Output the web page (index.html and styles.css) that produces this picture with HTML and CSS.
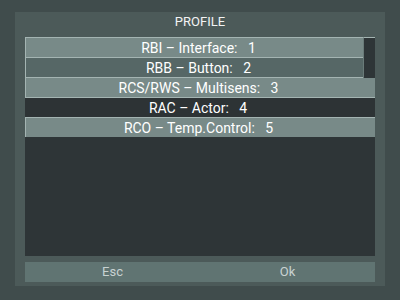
FILE: index.html
```html
<!DOCTYPE html>
<html>
<head>
    <title>Profile</title>
    <meta charset="UTF-8">
    <link rel="stylesheet" href="styles.css">
</head>
<body>
    <div class="panel">
        <h1 class="title">PROFILE</h1>

        <div class="list">
            <div class="row light">RBI – Interface:   1</div>
            <div class="row mid">RBB – Button:   2</div>
            <div class="row light">RCS/RWS – Multisens:   3</div>
            <div class="row selected">RAC – Actor:   4</div>
            <div class="row light">RCO – Temp.Control:   5</div>
            <div class="scrollbar"></div>
        </div>

        <div class="actions">
            <button class="action">Esc</button>
            <button class="action">Ok</button>
        </div>
    </div>
</body>
</html>
```

FILE: styles.css
```css
body {
    margin: 0;
    padding: 12px 15px 14px;
    background-color: #404c4c;
    font-family: Roboto, "Liberation Sans", sans-serif;
    height: 300px;
    box-sizing: border-box;
}

.panel {
    background-color: #4c5a59;
    padding: 0 10px 4px;
    display: flex;
    flex-direction: column;
    height: 100%;
    box-sizing: border-box;
}

.title {
    margin: 0;
    height: 25px;
    line-height: 20px;
    font-size: 13px;
    font-weight: normal;
    color: #f2f4f4;
    text-align: center;
}

.list {
    position: relative;
    background-color: #2e3537;
    height: 219px;
    flex-shrink: 0;
}

.row {
    height: 20px;
    line-height: 20px;
    box-sizing: border-box;
    border-top: 1px solid #a4b4b2;
    font-size: 14px;
    color: #ffffff;
    text-align: center;
    white-space: pre;
    padding-right: 4px;
}

.light {
    background-color: #788a88;
    border-left: 1px solid #a4b4b2;
}

.mid {
    background-color: #566766;
    border-left: 1px solid #a4b4b2;
}

.selected {
    background-color: #2d3335;
}

.scrollbar {
    position: absolute;
    top: 0;
    right: 0;
    width: 12px;
    height: 41px;
    background-color: #2e3537;
    border-left: 1px solid #6a7b79;
    border-top: 1px solid #a4b4b2;
    box-sizing: border-box;
}

.actions {
    display: grid;
    grid-template-columns: 1fr 1fr;
    margin-top: 6px;
    background-color: #607472;
    height: 20px;
}

.action {
    background: none;
    border: none;
    padding: 0;
    font-family: inherit;
    font-size: 13px;
    color: #c8d2d2;
    line-height: 20px;
}
```
